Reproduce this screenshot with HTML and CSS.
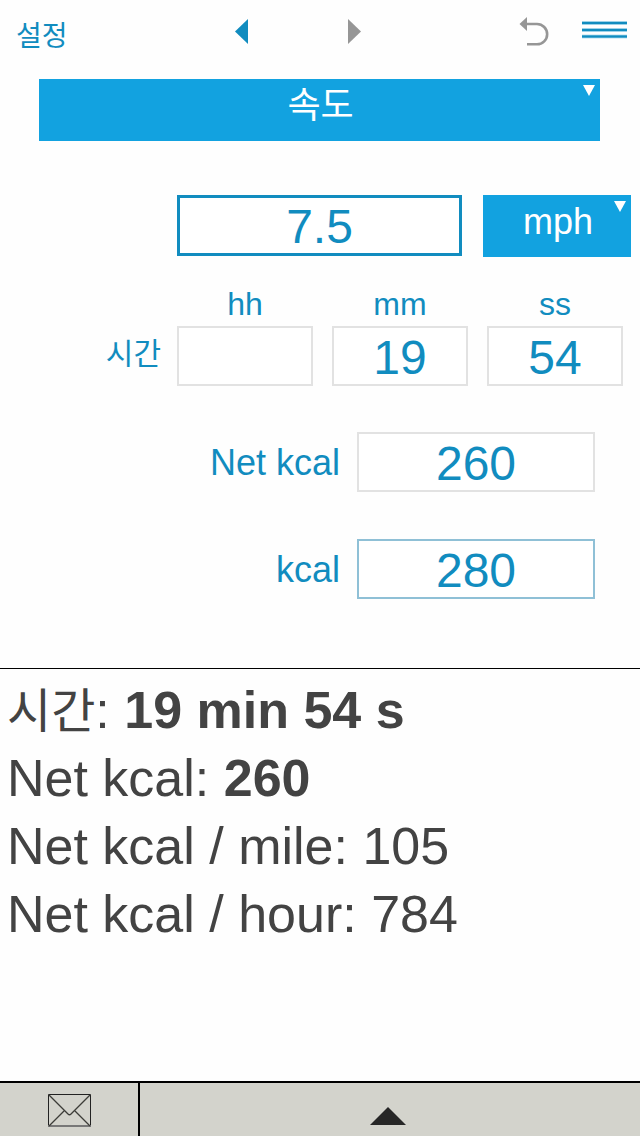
FILE: index.html
```html
<!DOCTYPE html>
<html lang="ko">
<head>
  <meta charset="UTF-8" />
  <meta name="viewport" content="width=device-width, initial-scale=1.0"/>
  <title>Net kcal</title>
  <link rel="stylesheet" href="styles.css">
</head>
<body>
  <header class="toolbar">
    <a class="settings" href="#settings">설정</a>
    <div class="history">
      <button type="button" aria-label="Previous">
        <svg width="13" height="25" viewBox="0 0 13 25"><path d="M13 0v25L0 12.5z" fill="#118cbf"/></svg>
      </button>
      <button type="button" aria-label="Next">
        <svg width="13" height="25" viewBox="0 0 13 25"><path d="M0 0v25l13-12.5z" fill="#969696"/></svg>
      </button>
    </div>
    <div class="actions">
      <button type="button" aria-label="Undo">
        <svg width="30" height="30" viewBox="0 0 30 30">
          <path d="M8 1v14L.5 8z" fill="#969696"/>
          <path d="M7 8h11a10 10 0 0 1 0 20.300H8" fill="none" stroke="#969696" stroke-width="2.600"/>
        </svg>
      </button>
      <button type="button" aria-label="Menu">
        <svg width="45" height="30" viewBox="0 0 45 30">
          <path d="M0 7h45M0 14h45M0 20.500h45" stroke="#7cc4e2" stroke-width="3.400"/>
          <path d="M0 7h45M0 14h45M0 20.500h45" stroke="#118cbf" stroke-width="2"/>
        </svg>
      </button>
    </div>
  </header>

  <main>
    <form class="calculator">
      <div class="picker mode">
        <select aria-label="Mode">
          <option>속도</option>
        </select>
      </div>

      <div class="row">
        <div class="fields speed">
          <input class="active" type="text" value="7.5" aria-label="Speed">
          <div class="picker">
            <select aria-label="Unit">
              <option>mph</option>
            </select>
          </div>
        </div>
      </div>

      <div class="row time">
        <span class="time-label">시간</span>
        <div class="fields parts">
          <div>
            <label for="hours">hh</label>
            <input type="text" id="hours">
          </div>
          <div>
            <label for="minutes">mm</label>
            <input type="text" id="minutes" value="19">
          </div>
          <div>
            <label for="seconds">ss</label>
            <input type="text" id="seconds" value="54">
          </div>
        </div>
      </div>

      <div class="energy">
        <label for="netKcal">Net kcal</label>
        <input type="text" id="netKcal" value="260">
      </div>
      <div class="energy">
        <label for="kcal">kcal</label>
        <input class="linked" type="text" id="kcal" value="280">
      </div>
    </form>

    <section class="results">
      <p><span class="hangul">시간</span>: <strong>19 min 54 s</strong></p>
      <p>Net kcal: <strong>260</strong></p>
      <p>Net kcal / mile: 105</p>
      <p>Net kcal / hour: 784</p>
    </section>
  </main>

  <footer class="bottom-bar">
    <button type="button" class="mail" aria-label="Mail">
      <svg width="43" height="33" viewBox="0 0 43 33" fill="none" stroke="#3c3c38">
        <path d="M.5 32V.5h42V32" stroke="#222"/>
        <path d="M0 32h43" stroke="#777" stroke-width="2"/>
        <path d="M1 1l19 19q1.500 1.500 3 0L42 1M1 32l15-15M42 32L27 17" stroke-width="1.300"/>
      </svg>
    </button>
    <button type="button" class="expand" aria-label="Expand">
      <svg width="36" height="18" viewBox="0 0 36 18"><path d="M18 0l18 18H0z" fill="#262626"/></svg>
    </button>
  </footer>
</body>
</html>
```
FILE: styles.css
```css
* {
  box-sizing: border-box;
}
body {
  font-family: "Liberation Sans", "Noto Sans CJK KR", sans-serif;
  margin: 0;
  min-height: 100vh;
  display: flex;
  flex-direction: column;
  background-color: #fefefe;
  color: #118cbf;
}
button {
  display: flex;
  padding: 0;
  border: none;
  background: none;
  cursor: pointer;
}
input, select {
  display: block;
  width: 100%;
  min-width: 0;
  font-family: inherit;
  border-radius: 0;
}

/* top bar */
.toolbar {
  display: grid;
  grid-template-columns: 219fr 126fr 266fr;
  align-items: center;
  height: 62px;
  padding: 0 13px 0 16px;
}
.settings {
  padding-top: 6px;
  font-size: 28px;
  color: inherit;
  text-decoration: none;
}
.history {
  display: flex;
  justify-content: space-between;
}
.actions {
  display: flex;
  justify-content: flex-end;
  gap: 33px;
}

/* drop-downs */
.picker {
  position: relative;
}
.picker select {
  appearance: none;
  height: 62px;
  padding: 0 0 10px 2px;
  border: none;
  background-color: #12a2e0;
  color: white;
  font-size: 36px;
  text-align: center;
  text-align-last: center;
}
.picker::after {
  content: "";
  position: absolute;
  top: 6px;
  right: 5px;
  border: 6px solid transparent;
  border-top: 11px solid white;
  border-bottom: none;
  pointer-events: none;
}

/* form */
.calculator {
  padding: 17px 0 69px;
}
.mode {
  margin: 0 40px 54px 39px;
}
.row {
  display: grid;
  grid-template-columns: 161fr 463fr;
  column-gap: 16px;
}
.fields {
  display: grid;
  grid-column: 2;
}
.speed {
  grid-template-columns: 285fr 148fr;
  gap: 21px;
  margin-right: 9px;
}
.parts {
  grid-template-columns: repeat(3, 1fr);
  gap: 19px;
  margin-right: 17px;
}
.calculator input {
  height: 60px;
  padding: 2px 0 0;
  border: 2px solid #e2e2e2;
  background-color: white;
  color: #118cbf;
  font-size: 48px;
  text-align: center;
}
.calculator input.active {
  height: 61px;
  border: 3px solid #118cbf;
}
.calculator input.linked {
  border: 2px solid #8fc0d6;
}
.time {
  margin: 27px 0 46px;
}
.time label {
  display: block;
  margin-bottom: 2px;
  font-size: 32px;
  line-height: 40px;
  text-align: center;
}
.time-label {
  align-self: end;
  font-size: 30px;
  line-height: 64px;
  text-align: right;
}
.energy {
  display: grid;
  grid-template-columns: 340fr 238fr;
  column-gap: 17px;
  align-items: center;
  margin-right: 45px;
}
.energy + .energy {
  margin-top: 47px;
}
.energy label {
  padding-top: 2px;
  font-size: 36px;
  text-align: right;
}

/* results */
.results {
  padding: 7px;
  border-top: 1px solid black;
  color: #434343;
  font-size: 52px;
  line-height: 68px;
}
.results p {
  margin: 0;
}
.hangul {
  font-size: 48px;
  line-height: 1;
}

/* bottom bar */
.bottom-bar {
  display: flex;
  height: 55px;
  margin-top: auto;
  border-top: 2px solid black;
  background-color: #d3d3cc;
}
.mail, .expand {
  align-items: center;
  justify-content: center;
}
.mail {
  width: 140px;
  padding-top: 2px;
  border-right: 2px solid black;
}
.expand {
  flex: 1;
  padding: 12px 4px 0 0;
}
```
